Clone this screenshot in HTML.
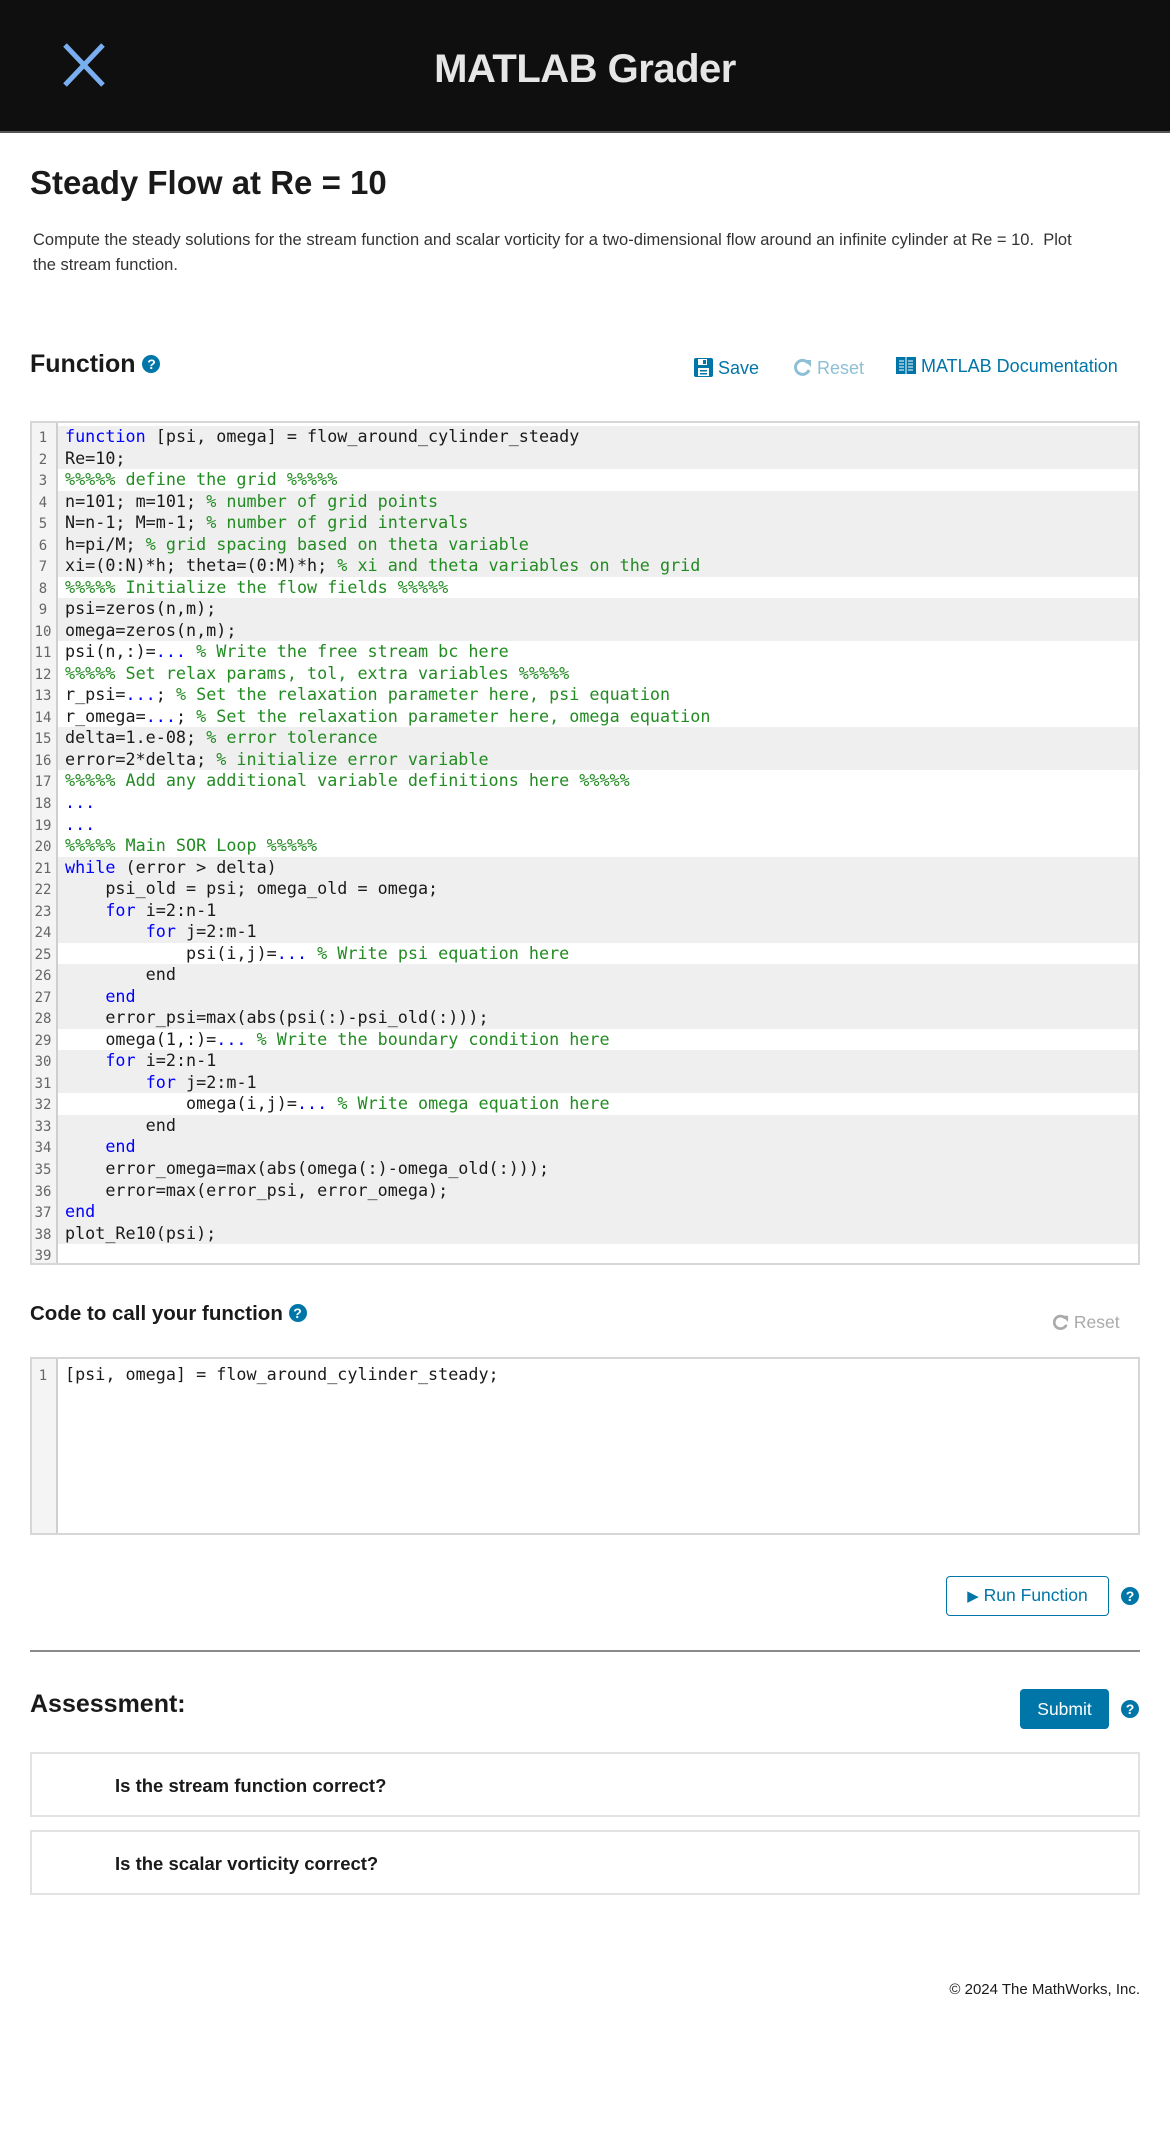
<!DOCTYPE html>
<html><head><meta charset="utf-8"><style>
*{margin:0;padding:0;box-sizing:border-box}
body{width:1170px;height:2142px;background:#fff;font-family:"Liberation Sans",Arial,sans-serif;color:#1a1a1a;position:relative;overflow:hidden}
.a{position:absolute}
.hdr{left:0;top:0;width:1170px;height:133px;background:#0f0f0f;border-bottom:2px solid #555}
.ttl{left:0;width:1170px;top:47px;text-align:center;color:#e6e6e6;font-weight:bold;font-size:40px;letter-spacing:-0.5px}
.ed{border:2px solid #d6d6d6;background:#fff}
.gut{position:absolute;left:0;top:0;bottom:0;width:26px;background:#f4f4f4;border-right:2px solid #cfcfcf}
.ln{position:absolute;left:26px;right:0;height:21.53px;font-family:"DejaVu Sans Mono","Liberation Mono",monospace;font-size:16.75px;line-height:21.53px;white-space:pre;padding-left:7px;color:#1a1a1a}
.ln.g{background:#efefef}
.num{position:absolute;left:-28px;width:26px;text-align:center;font-size:14px;color:#666;top:2px}
.k{color:#0000ff}.c{color:#228b22}
.h2{font-weight:bold;font-size:25px;color:#1a1a1a}
.q{display:inline-block;width:18px;height:18px;border-radius:50%;background:#0076a8;color:#fff;font-size:14px;font-weight:bold;text-align:center;line-height:18px;vertical-align:3px}
.lnk{color:#0076a8;font-size:18px}
.box{left:30px;width:1110px;border:2px solid #e2e2e2;height:65px}
.box span{position:absolute;left:83px;top:21px;font-weight:bold;font-size:18.5px}
</style></head><body>
<div class="a hdr"></div>
<svg class="a" style="left:62px;top:43px" width="44" height="44" viewBox="0 0 44 44"><path d="M3 2 L41 42 M41 2 L3 42" stroke="#79aff0" stroke-width="5" fill="none"/></svg>
<div class="a ttl">MATLAB Grader</div>

<div class="a" style="left:30px;top:164px;font-size:33px;font-weight:bold">Steady Flow at Re = 10</div>
<div class="a" style="left:33px;top:228px;width:1060px;font-size:16.5px;line-height:25px;color:#333">Compute the steady solutions for the stream function and scalar vorticity for a two-dimensional flow around an infinite cylinder at Re = 10.&nbsp; Plot the stream function.</div>

<div class="a h2" style="left:30px;top:350px">Function <span class="q">?</span></div>
<div class="a lnk" style="left:694px;top:358px"><svg width="19" height="19" viewBox="0 0 19 19" style="vertical-align:-3px"><rect x="0" y="0" width="19" height="19" rx="2" fill="#0076a8"/><rect x="4" y="1" width="9" height="6" fill="#fff"/><rect x="9" y="2" width="3" height="4" fill="#0076a8"/><rect x="4" y="10" width="11" height="8" fill="#fff"/><rect x="6" y="12" width="7" height="1.5" fill="#0076a8"/><rect x="6" y="15" width="7" height="1.5" fill="#0076a8"/></svg> Save</div>
<div class="a lnk" style="left:793px;top:358px;color:#8dbfd6"><svg width="19" height="19" viewBox="0 0 19 19" style="vertical-align:-3px"><path d="M15 5 A7 7 0 1 0 16 12" stroke="#8dbfd6" stroke-width="3" fill="none"/><path d="M11 2 L18 2 L18 9 Z" fill="#8dbfd6"/></svg> Reset</div>
<div class="a lnk" style="left:896px;top:356px"><svg width="20" height="19" viewBox="0 0 20 19" style="vertical-align:-3px"><rect x="0" y="1" width="20" height="17" fill="#0076a8"/><rect x="9.5" y="1" width="1" height="17" fill="#fff"/><g stroke="#fff" stroke-width="1"><path d="M3 5h5M3 8h5M3 11h5M3 14h5M12 5h5M12 8h5M12 11h5M12 14h5"/></g></svg> MATLAB Documentation</div>

<div class="a ed" style="left:30px;top:421px;width:1110px;height:844px">
<div class="gut"></div>
<div id="code"></div>
</div>

<div class="a" style="left:30px;top:1302px;font-weight:bold;font-size:20.5px">Code to call your function <span class="q" style="vertical-align:2px">?</span></div>
<div class="a lnk" style="left:1052px;top:1312px;color:#aaa;font-size:17.5px"><svg width="17" height="17" viewBox="0 0 19 19" style="vertical-align:-3px"><path d="M15 5 A7 7 0 1 0 16 12" stroke="#aaa" stroke-width="3" fill="none"/><path d="M11 2 L18 2 L18 9 Z" fill="#aaa"/></svg> Reset</div>
<div class="a ed" style="left:30px;top:1357px;width:1110px;height:178px">
<div class="gut"></div>
<div class="ln" style="top:5px"><span class="num">1</span>[psi, omega] = flow_around_cylinder_steady;</div>
</div>

<div class="a" style="left:946px;top:1576px;width:163px;height:40px;border:1.5px solid #0076a8;border-radius:4px;color:#0076a8;font-size:17.5px;line-height:37px;text-align:center"><span style="font-size:15px">▶</span> Run Function</div>
<div class="a" style="left:1121px;top:1587px"><span class="q">?</span></div>

<div class="a" style="left:30px;top:1650px;width:1110px;height:2px;background:#8a8a8a"></div>
<div class="a h2" style="left:30px;top:1690px">Assessment:</div>
<div class="a" style="left:1020px;top:1689px;width:89px;height:40px;background:#0076a8;border-radius:4px;color:#fff;font-size:17.5px;line-height:40px;text-align:center">Submit</div>
<div class="a" style="left:1121px;top:1700px"><span class="q">?</span></div>

<div class="a box" style="top:1752px"><span>Is the stream function correct?</span></div>
<div class="a box" style="top:1830px"><span>Is the scalar vorticity correct?</span></div>

<div class="a" style="right:30px;top:1981px;font-size:15px;color:#1a1a1a">© 2024 The MathWorks, Inc.</div>

<script>
var L=[
[1,'<span class="k">function</span> [psi, omega] = flow_around_cylinder_steady'],
[1,'Re=10;'],
[0,'<span class="c">%%%%% define the grid %%%%%</span>'],
[1,'n=101; m=101; <span class="c">% number of grid points</span>'],
[1,'N=n-1; M=m-1; <span class="c">% number of grid intervals</span>'],
[1,'h=pi/M; <span class="c">% grid spacing based on theta variable</span>'],
[1,'xi=(0:N)*h; theta=(0:M)*h; <span class="c">% xi and theta variables on the grid</span>'],
[0,'<span class="c">%%%%% Initialize the flow fields %%%%%</span>'],
[1,'psi=zeros(n,m);'],
[1,'omega=zeros(n,m);'],
[0,'psi(n,:)=<span class="k">...</span> <span class="c">% Write the free stream bc here</span>'],
[0,'<span class="c">%%%%% Set relax params, tol, extra variables %%%%%</span>'],
[0,'r_psi=<span class="k">...</span>; <span class="c">% Set the relaxation parameter here, psi equation</span>'],
[0,'r_omega=<span class="k">...</span>; <span class="c">% Set the relaxation parameter here, omega equation</span>'],
[1,'delta=1.e-08; <span class="c">% error tolerance</span>'],
[1,'error=2*delta; <span class="c">% initialize error variable</span>'],
[0,'<span class="c">%%%%% Add any additional variable definitions here %%%%%</span>'],
[0,'<span class="k">...</span>'],
[0,'<span class="k">...</span>'],
[0,'<span class="c">%%%%% Main SOR Loop %%%%%</span>'],
[1,'<span class="k">while</span> (error > delta)'],
[1,'    psi_old = psi; omega_old = omega;'],
[1,'    <span class="k">for</span> i=2:n-1'],
[1,'        <span class="k">for</span> j=2:m-1'],
[0,'            psi(i,j)=<span class="k">...</span> <span class="c">% Write psi equation here</span>'],
[1,'        end'],
[1,'    <span class="k">end</span>'],
[1,'    error_psi=max(abs(psi(:)-psi_old(:)));'],
[0,'    omega(1,:)=<span class="k">...</span> <span class="c">% Write the boundary condition here</span>'],
[1,'    <span class="k">for</span> i=2:n-1'],
[1,'        <span class="k">for</span> j=2:m-1'],
[0,'            omega(i,j)=<span class="k">...</span> <span class="c">% Write omega equation here</span>'],
[1,'        end'],
[1,'    <span class="k">end</span>'],
[1,'    error_omega=max(abs(omega(:)-omega_old(:)));'],
[1,'    error=max(error_psi, error_omega);'],
[1,'<span class="k">end</span>'],
[1,'plot_Re10(psi);'],
[0,'']];
var h='';
for(var i=0;i<L.length;i++){h+='<div class="ln'+(L[i][0]?' g':'')+'" style="top:'+(3+i*21.53)+'px"><span class="num">'+(i+1)+'</span>'+L[i][1]+'</div>';}
document.getElementById('code').innerHTML=h;
</script>
</body></html>
